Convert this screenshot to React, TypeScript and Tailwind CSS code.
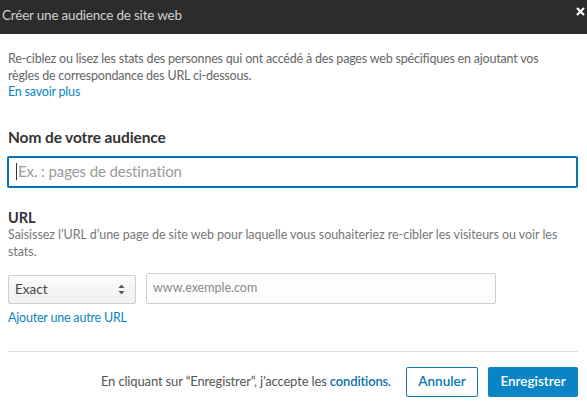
import React from "react";

export default function App() {
  return (
    <div className="w-[587px] h-[409px] bg-white overflow-hidden font-['Lato',sans-serif] whitespace-nowrap">
      <div className="h-[34px] bg-[#2c2c2c] flex justify-between pl-[2px] pr-[2px]">
        <span className="mt-[7px] text-[13.5px] leading-[16px] tracking-[-0.2px] text-[#d0d0d0]">Créer une audience de site web</span>
        <svg width="9" height="9" viewBox="0 0 9 9" className="mt-[7px]">
          <path d="M1 1L8 8M8 1L1 8" stroke="#ffffff" strokeWidth="2.2" />
        </svg>
      </div>
      <div className="pl-[8px] pr-[9px]">
        <p className="mt-[17px] text-[12.5px] leading-[16.5px] tracking-[-0.2px] text-[#666666]">
          Re-ciblez ou lisez les stats des personnes qui ont accédé à des pages web spécifiques en ajoutant vos
          <br />
          règles de correspondance des URL ci-dessous.
          <br />
          <a className="text-[#0a84c4]">En savoir plus</a>
        </p>
        <div className="mt-[26px] text-[15.5px] leading-[20px] tracking-[-0.1px] font-bold text-[#333333]">Nom de votre audience</div>
        <div className="mt-[9px] ml-[-1px] h-[32px] border-2 border-[#0a73b1] rounded-[2px] flex items-center pl-[7px]">
          <span className="w-[1px] h-[17px] bg-[#333] mr-[1px]" />
          <span className="text-[15px] tracking-[-0.1px] text-[#9a9a9a]">Ex. : pages de destination</span>
        </div>
        <div className="mt-[21px] text-[14.5px] leading-[17px] font-bold text-[#333333]">URL</div>
        <p className="text-[12.5px] leading-[17px] tracking-[-0.05px] text-[#777777]">
          Saisissez l’URL d’une page de site web pour laquelle vous souhaiteriez re-cibler les visiteurs ou voir les
          <br />
          stats.
        </p>
        <div className="mt-[13px] flex items-end gap-[10px]">
          <div className="w-[128px] h-[29px] border border-[#cfcfcf] rounded-[2px] bg-gradient-to-b from-[#fbfbfb] to-[#f0f0f0] flex items-center justify-between pl-[6px] pr-[10px]">
            <span className="text-[13.5px] text-[#444444]">Exact</span>
            <svg width="7" height="11" viewBox="0 0 7 11">
              <path d="M3.5 0.5L6.5 4H0.5Z M3.5 10.5L6.5 7H0.5Z" fill="#555555" />
            </svg>
          </div>
          <div className="w-[350px] h-[31px] border border-[#cfcfcf] rounded-[2px] bg-[#fdfdfd] flex items-center pl-[6px]">
            <span className="text-[12.5px] text-[#8a8a8a]">www.exemple.com</span>
          </div>
        </div>
        <div className="mt-[5px] text-[12.5px] leading-[17px] tracking-[-0.2px] text-[#0a84c4]">Ajouter une autre URL</div>
        <div className="mt-[25px] h-[1px] bg-[#dddddd]" />
        <div className="mt-[15px] flex items-center justify-end">
          <span className="text-[13px] tracking-[-0.15px] text-[#555555]">
            En cliquant sur “Enregistrer”, j’accepte les{" "}
            <span className="text-[#0a70ad] font-semibold">conditions</span>.
          </span>
          <div className="ml-[15px] w-[72px] h-[30px] border border-[#0a77b5] rounded-[2px] flex items-center justify-center text-[13.5px] font-semibold text-[#0a77b5]">
            Annuler
          </div>
          <div className="ml-[10px] w-[90px] h-[30px] bg-[#0a84c4] rounded-[2px] flex items-center justify-center text-[13.5px] font-semibold text-white">
            Enregistrer
          </div>
        </div>
      </div>
    </div>
  );
}
